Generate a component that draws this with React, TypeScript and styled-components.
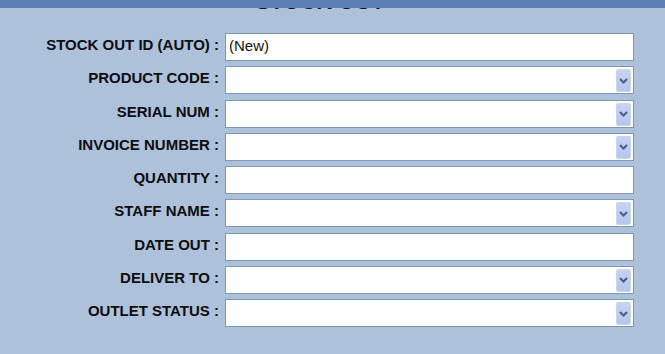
import styled, { createGlobalStyle } from "styled-components";

interface FieldDef {
  label: string;
  value?: string;
  dropdown?: boolean;
}

const fields: FieldDef[] = [
  { label: "STOCK OUT ID (AUTO) :", value: "(New)" },
  { label: "PRODUCT CODE :", dropdown: true },
  { label: "SERIAL NUM :", dropdown: true },
  { label: "INVOICE NUMBER :", dropdown: true },
  { label: "QUANTITY :" },
  { label: "STAFF NAME :", dropdown: true },
  { label: "DATE OUT :" },
  { label: "DELIVER TO :", dropdown: true },
  { label: "OUTLET STATUS :", dropdown: true },
];

export default function App() {
  return (
    <>
      <GlobalStyle />
      <Page>
        <TopBar />
        <TitleClip>
          <Title>STOCK OUT</Title>
        </TitleClip>
        <Form>
          {fields.map((f) => (
            <Row key={f.label}>
              <Label>{f.label}</Label>
              <Field>
                <FieldText>{f.value}</FieldText>
                {f.dropdown && (
                  <DropButton>
                    <svg width="9" height="6" viewBox="0 0 9 6">
                      <path
                        d="M1 1 L4.5 4.5 L8 1"
                        fill="none"
                        stroke="#4a5d85"
                        strokeWidth="2"
                      />
                    </svg>
                  </DropButton>
                )}
              </Field>
            </Row>
          ))}
        </Form>
      </Page>
    </>
  );
}

const GlobalStyle = createGlobalStyle`
  html, body {
    margin: 0;
    padding: 0;
    background: #adc1db;
  }
  body {
    font-family: "Liberation Sans", Arial, sans-serif;
  }
`;

const Page = styled.div`
  width: 665px;
  height: 354px;
  background: #adc1db;
  overflow: hidden;
`;

const TopBar = styled.div`
  height: 8px;
  background: #5b80b3;
`;

// only the bottom edge of the title peeks out below the bar
const TitleClip = styled.div`
  height: 4px;
  overflow: hidden;
  display: flex;
  justify-content: center;
  padding-right: 25px;
`;

const Title = styled.h1`
  margin: -18px 0 0;
  font-size: 22px;
  line-height: 24px;
  font-weight: 700;
  color: #111;
`;

const Form = styled.div`
  display: flex;
  flex-direction: column;
  gap: 5.25px;
  padding-top: 21px;
`;

const Row = styled.div`
  display: grid;
  grid-template-columns: 219px 409px;
  column-gap: 6px;
  align-items: center;
  height: 28px;
`;

const Label = styled.div`
  text-align: right;
  font-size: 15px;
  font-weight: 700;
  color: #0d0d0d;
  white-space: nowrap;
  padding-bottom: 5px;
`;

const Field = styled.div`
  display: flex;
  align-items: stretch;
  height: 28px;
  box-sizing: border-box;
  background: #fff;
  border: 1px solid #7f97b6;
`;

const FieldText = styled.span`
  flex: 1;
  padding: 3px 0 0 3px;
  font-size: 15px;
  color: #111;
`;

const DropButton = styled.div`
  display: flex;
  align-items: center;
  justify-content: center;
  width: 15px;
  margin: 2px 2px 1px 0;
  box-sizing: border-box;
  border: 1px solid #c9d5ef;
  border-radius: 2px;
  background: linear-gradient(#c6d3f2, #b5c6ee);
`;
